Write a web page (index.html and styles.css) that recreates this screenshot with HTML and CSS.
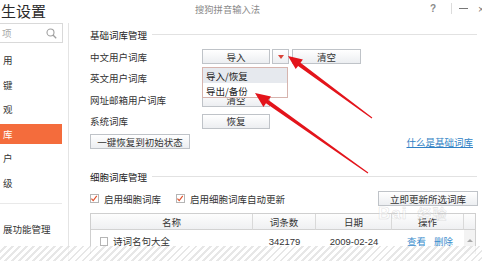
FILE: index.html
```html
<!DOCTYPE html>
<html lang="zh-CN">
<head>
<meta charset="utf-8">
<title>属性设置</title>
<link rel="stylesheet" href="styles.css">
</head>
<body>
<div class="window">
  <div class="titlebar">
    <div class="title">生设置</div>
    <div class="appname">搜狗拼音输入法</div>
    <div class="controls">
      <span class="ctl-help">?</span>
      <span class="ctl-sep"></span>
      <span class="ctl-min"></span>
      <span class="ctl-close">×</span>
    </div>
  </div>
  <div class="body">
    <div class="sidebar">
      <div class="search">
        <span class="search-text">项</span>
        <svg class="search-icon" width="11" height="11" viewBox="0 0 11 11"><circle cx="4.5" cy="4.5" r="3.5" fill="none" stroke="#a0a0a0" stroke-width="1.1"/><path d="M7 7 L10.2 10.2" stroke="#a0a0a0" stroke-width="1.3"/></svg>
      </div>
      <ul class="nav">
        <li class="nav-item"><span class="nav-label">用</span></li>
        <li class="nav-item"><span class="nav-label">键</span></li>
        <li class="nav-item"><span class="nav-label">观</span></li>
        <li class="nav-item"><span class="nav-label active">库</span></li>
        <li class="nav-item"><span class="nav-label">户</span></li>
        <li class="nav-item"><span class="nav-label">级</span></li>
      </ul>
      <div class="nav-sep"></div>
      <div class="nav-item"><span class="nav-label">展功能管理</span></div>
    </div>
    <div class="main">
      <div class="section-head"><span class="section-title">基础词库管理</span><span class="section-line"></span></div>
      <div class="lib-row">
        <span class="lib-label">中文用户词库</span>
        <span class="btn w68">导入</span>
        <span class="btn drop"><span class="tri"></span></span>
        <span class="btn w69 gap3">清空</span>
      </div>
      <div class="lib-row">
        <span class="lib-label">英文用户词库</span>
        <span class="btn w68">清空</span>
      </div>
      <div class="lib-row">
        <span class="lib-label">网址邮箱用户词库</span>
        <span class="btn w68">清空</span>
      </div>
      <div class="lib-row">
        <span class="lib-label">系统词库</span>
        <span class="btn w68">恢复</span>
      </div>
      <div class="reset-row">
        <span class="btn reset">一键恢复到初始状态</span>
        <a class="link" href="#">什么是基础词库</a>
      </div>
      <div class="section-head second"><span class="section-title">细胞词库管理</span><span class="section-line"></span></div>
      <div class="check-row">
        <span class="check on"><svg width="9" height="9" viewBox="0 0 9 9"><path d="M1.6 4.6 L3.6 6.8 L7.6 1.6" fill="none" stroke="#e0502a" stroke-width="1.3"/></svg></span>
        <span class="check-text">启用细胞词库</span>
        <span class="check on second-check"><svg width="9" height="9" viewBox="0 0 9 9"><path d="M1.6 4.6 L3.6 6.8 L7.6 1.6" fill="none" stroke="#e0502a" stroke-width="1.3"/></svg></span>
        <span class="check-text">启用细胞词库自动更新</span>
        <span class="btn update">立即更新所选词库</span>
      </div>
      <div class="table">
        <div class="th">名称</div>
        <div class="th">词条数</div>
        <div class="th">日期</div>
        <div class="th">操作</div>
        <div class="th last"></div>
        <div class="td name"><span class="check"></span><span>诗词名句大全</span></div>
        <div class="td num">342179</div>
        <div class="td num">2009-02-24</div>
        <div class="td ops"><a href="#">查看</a><a href="#">删除</a></div>
        <div class="td scroll"><span class="up"></span></div>
      </div>
    </div>
  </div>

  <div class="menu">
    <div class="menu-item hover">导入/恢复</div>
    <div class="menu-item">导出/备份</div>
  </div>

  <div class="watermark">Bai<span class="wm-cn">经验</span></div>

  <svg class="arrows" width="482" height="261" viewBox="0 0 482 261">
    <polygon fill="#e3141b" points="288,56 302.9,59.5 300.5,62.7 372.3,117.6 371.7,118.4 298.1,65.9 295.7,69.1"/>
    <polygon fill="#e3141b" points="255,93 271,96.4 268.4,100.1 368.3,172.6 367.7,173.4 266,103.3 263.4,107"/>
  </svg>

  <div class="hatch"></div>
</div>
</body>
</html>
```
FILE: styles.css
```css
* { box-sizing: border-box; margin: 0; padding: 0; }
html, body { width: 482px; height: 261px; overflow: hidden; background: #fff; }
body {
  font-family: "Noto Sans CJK SC", "Liberation Sans", sans-serif;
  font-size: 9.5px;
  color: #333;
}
ul { list-style: none; }
a { text-decoration: none; }

.window { position: relative; width: 482px; height: 261px; overflow: hidden; background: #fff; }

.titlebar { height: 23px; display: flex; align-items: center; }
.title { font-size: 15px; line-height: 23px; color: #2a2a2a; padding-left: 1px; width: 195px; margin-top: -2px; }
.appname { font-size: 9.3px; color: #8a8a8a; margin-top: -6px; letter-spacing: 0; }
.controls { margin-left: auto; display: flex; align-items: center; margin-top: -6px; height: 12px; }
.ctl-help { font-family: "Liberation Sans", sans-serif; font-size: 10px; font-weight: bold; color: #8a8a8a; margin-right: 15px; }
.ctl-sep { width: 1px; height: 11px; background: #dcdcdc; margin-right: 7px; }
.ctl-min { width: 9px; height: 1.5px; background: #777; margin-right: 10px; }
.ctl-close { font-family: "Liberation Sans", sans-serif; font-size: 11px; color: #777; width: 4px; overflow: hidden; }

.body { display: flex; height: 238px; }

.sidebar { width: 69px; border-right: 1px solid #e4e4e4; flex-shrink: 0; }
.search { width: 63px; height: 20px; border: 1px solid #d9d9d9; border-left: none; display: flex; align-items: center; padding-left: 2px; }
.search-text { color: #a8a8a8; font-size: 9.5px; }
.search-icon { margin-left: auto; margin-right: 5px; }
.nav { margin-top: 5px; }
.nav-item { height: 24.5px; display: flex; align-items: center; }
.nav-label { display: flex; align-items: center; width: 62px; height: 20px; padding-left: 3px; color: #333; font-size: 9.5px; }
.nav-label.active { background: #f46c3c; color: #fff; }
.nav-sep { width: 62px; height: 1px; background: #e9e9e9; margin-top: 8px; margin-bottom: 17px; }
.nav-sep + .nav-item { height: 16px; }

.main { flex: 1; padding: 5px 5px 0 21px; }

.section-head { display: flex; align-items: center; height: 13px; }
.section-title { color: #222; font-size: 9.5px; margin-right: 5px; }
.section-line { flex: 1; height: 1px; background: #e2e2e2; margin-right: 1px; margin-top: -1px; }
.section-head.second { margin-top: 21px; }

.lib-row { height: 21.5px; display: flex; align-items: center; }
.section-head + .lib-row { margin-top: 5px; }
.lib-label { width: 112px; flex-shrink: 0; }

.btn {
  height: 15px;
  display: inline-flex; align-items: center; justify-content: center;
  border: 1px solid #bfc3c8;
  background: linear-gradient(#ffffff, #eceef1);
  color: #333; font-size: 9.5px;
  flex-shrink: 0;
}
.w68 { width: 68px; }
.w69 { width: 69px; }
.gap3 { margin-left: 3px; }
.drop { width: 17px; margin-left: 2px; }
.tri { width: 0; height: 0; border-left: 3px solid transparent; border-right: 3px solid transparent; border-top: 4px solid #d9453a; margin-top: 1px; }

.reset-row { display: flex; align-items: center; height: 15px; margin-top: 2px; }
.reset { width: 100px; }
.link { margin-left: auto; margin-right: 5px; color: #2f7fc4; text-decoration: underline; font-size: 9.5px; }

.check-row { display: flex; align-items: center; height: 15px; margin-top: 8px; }
.check { width: 9px; height: 9px; border: 1px solid #b5b5b5; background: #fff; display: inline-flex; flex-shrink: 0; }
.check svg { margin: -1px 0 0 -1px; }
.check-text { margin-left: 5px; }
.second-check { margin-left: 15px; }
.update { width: 100px; margin-left: auto; height: 15px; }

.table {
  margin-top: 7px; margin-right: 2px;
  display: grid;
  grid-template-columns: 162px 63px 76px 72px 12px;
  grid-template-rows: 16px 24px;
  border-top: 1px solid #cfcfcf;
  border-left: 1px solid #cfcfcf;
}
.th {
  display: flex; align-items: center; justify-content: center;
  background: linear-gradient(#fdfdfd, #eff0f2);
  border-right: 1px solid #d9d9d9;
  border-bottom: 1px solid #d2d2d2;
  color: #333;
}
.th.last { border-right: 1px solid #cfcfcf; }
.td { display: flex; align-items: center; padding-bottom: 2px; }
.td.name { padding-left: 9px; }
.td.name .check { margin-right: 5px; width: 8px; height: 9px; }
.td.num { justify-content: center; font-family: "Liberation Sans", sans-serif; font-size: 9.5px; color: #333; }
.td.ops { justify-content: center; gap: 8px; padding-left: 4px; }
.td.ops a { color: #3a8ccc; }
.td.scroll { background: #f3f3f3; border-right: 1px solid #cfcfcf; justify-content: center; align-items: flex-start; padding-top: 9px; }
.up { width: 0; height: 0; border-left: 3px solid transparent; border-right: 3px solid transparent; border-bottom: 3px solid #a9a9a9; }

.menu {
  position: absolute; left: 202px; top: 67px; width: 86px; height: 31px;
  background: #fff; border: 1px solid #d6b4ae;
}
.menu-item { height: 15px; display: flex; align-items: center; padding-left: 3px; font-size: 9.5px; color: #222; }
.menu-item.hover { background: #e6e9ee; }

.watermark {
  position: absolute; left: 378px; top: 203px;
  font-family: "Liberation Sans", sans-serif; font-size: 17px; font-weight: bold;
  color: rgba(255,255,255,0.5);
  -webkit-text-stroke: 0.6px rgba(170,170,170,0.35);
  letter-spacing: 1px;
}
.wm-cn { font-family: "Noto Sans CJK SC", sans-serif; font-size: 14px; margin-left: 10px; }

.arrows { position: absolute; left: 0; top: 0; pointer-events: none; }

.hatch {
  position: absolute; left: 0; right: 0; top: 246px; bottom: 0;
  background: repeating-linear-gradient(135deg, rgba(255,255,255,0.75) 0px, rgba(255,255,255,0.75) 3px, rgba(225,225,225,0.8) 3px, rgba(225,225,225,0.8) 5px);
}
```
